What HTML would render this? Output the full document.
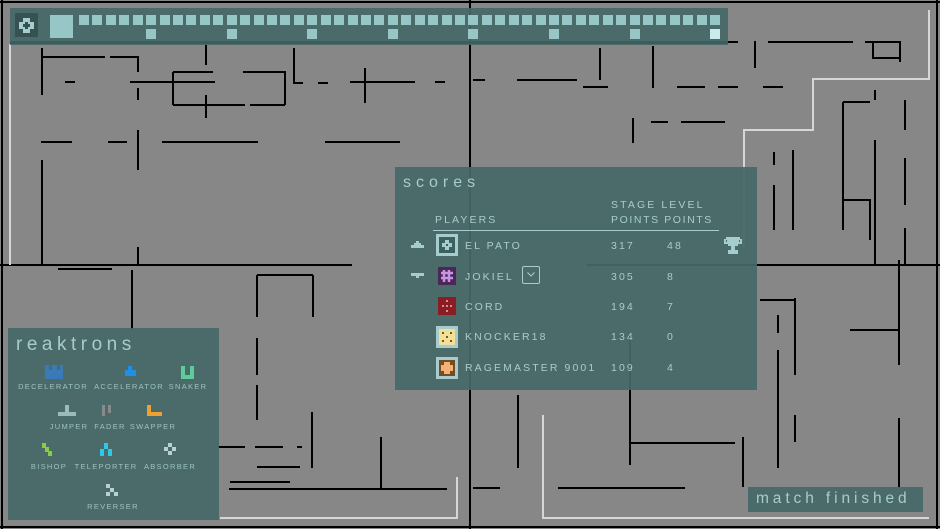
<!DOCTYPE html>
<html><head><meta charset="utf-8"><style>
html,body{margin:0;padding:0;}
body{width:940px;height:529px;background:#878787;position:relative;overflow:hidden;font-family:"Liberation Sans",sans-serif;color:#a6cdcd;}
.p{position:absolute;background:rgba(70,103,103,0.93);}
.t{position:absolute;white-space:nowrap;text-transform:uppercase;font-size:10.5px;letter-spacing:2.1px;line-height:1;}
.sq{position:absolute;background:#97c6c6;width:10px;height:10px;}
.lab{position:absolute;font-size:7.5px;letter-spacing:1.3px;white-space:nowrap;color:#9cc3c3;transform:translateX(-50%);}
</style></head><body>
<svg width="940" height="529" style="position:absolute;left:0;top:0" xmlns="http://www.w3.org/2000/svg">
<g stroke="#000" stroke-width="2" fill="none">
<path d="M0 2H940M2 0V529M937 0V529M0 527H940M470 0V529M0 265H352M587 265H940"/>
<path d="M42 48V95M42 57H105M110 57H138V72M65 82H75M130 82H215M138 88V100M173 72V105M173 72H213M206 45V65M173 105H245M206 95V118M250 105H285M243 72H285V105M294 48V83H303M318 83H328M350 82H415M435 82H445M365 68V103"/>
<path d="M41 142H72M108 142H127M138 130V170M162 142H258M325 142H400M42 160V265M138 247V265M58 269H112M132 270V330M257 275H313M257 275V317M313 275V317"/>
<path d="M728 42H738M755 41V68M768 42H853M865 42H900V62M873 42V58H900M600 48V80M653 46V88M473 80H485M517 80H577M583 87H608M677 87H705M718 87H738M763 87H783M633 118V143M651 122H668M681 122H725M793 150V230M875 90V100M875 140V265M843 102H870M843 102V230M843 200H870V240M905 100V130M905 158V205M905 228V265M774 152V165M774 185V230"/>
<path d="M899 260V365M795 298V375M760 300H795M778 315V333M778 350V468M795 415V442M850 330H900M899 418V487M518 395V468M630 335V465M630 443H735M743 437V487M473 488H500M558 488H685"/>
<path d="M257 338V375M257 385V420M312 412V468M218 447H245M255 447H283M297 447H302M257 467H300M230 482H290M229 489H447M381 437V489"/>
</g>
<g stroke="#d6d6d6" stroke-width="2" fill="none">
<path d="M10 44V265M929 10V79H813V130H744V250M543 415V518H929M457 477V518H220"/>
</g>
</svg>

<!-- top bar -->
<div class="p" style="left:10px;top:8px;width:718px;height:37px;"></div>
<div style="position:absolute;left:10px;top:41px;width:718px;height:3px;background:#3f5c5c"></div>
<div style="position:absolute;left:15px;top:13px;width:23px;height:24px;background:#355151"></div>
<svg style="position:absolute;left:18px;top:17px" width="17" height="17" viewBox="0 0 17 17"><path d="M5 1H12V5H16V12H12V16H5V12H1V5H5Z" fill="#a6cdcd"/><path d="M7 5H10V7H12V10H10V12H7V10H5V7H7Z" fill="#355151"/></svg>
<div style="position:absolute;left:50px;top:15px;width:23px;height:23px;background:#97c6c6"></div>
<div id="sqs"></div>

<!-- scores -->
<div class="p" style="left:395px;top:167px;width:362px;height:223px;"></div>
<div class="t" style="left:403px;top:175px;font-size:16px;letter-spacing:5px;text-transform:lowercase">scores</div>
<div class="t" style="left:611px;top:200px">Stage Level</div>
<div class="t" style="left:611px;top:215px;letter-spacing:1.6px">Points Points</div>
<div class="t" style="left:435px;top:215px">Players</div>
<div style="position:absolute;left:433px;top:230px;width:286px;height:1px;background:#a6cdcd"></div>
<svg style="position:absolute;left:723px;top:236px" width="20" height="20" viewBox="0 0 20 20"><path d="M3 1H17V3H19V8H15V10H12V14H15V18H5V14H8V10H5V8H1V3H3Z M3 4V6H4V4Z M16 4V6H17V4Z" fill="#a6cdcd" fill-rule="evenodd"/></svg>
<svg style="position:absolute;left:411px;top:241px" width="13" height="7"><path d="M5 0H8V2H10V4H13V7H0V4H3V2H5Z" fill="#a6cdcd"/></svg>
<svg style="position:absolute;left:411px;top:273px" width="13" height="7"><path d="M0 0H13V3H8V5H5V3H0Z" fill="#a6cdcd"/></svg>
<div style="position:absolute;left:436px;top:234px;width:22px;height:22px;background:#a6cdcd"></div>
<div style="position:absolute;left:439px;top:237px;width:16px;height:16px;background:#3f6060"></div>
<svg style="position:absolute;left:441px;top:239px" width="12" height="12"><path d="M4 1H8V4H11V8H8V11H4V8H1V4H4Z" fill="#a6cdcd"/><rect x="5" y="5" width="2" height="2" fill="#3f6060"/></svg>
<div style="position:absolute;left:438px;top:267px;width:18px;height:18px;background:#4a2758"></div>
<svg style="position:absolute;left:440px;top:269px" width="14" height="14"><path d="M4 1V13M9 1V13M1 4H13M1 9H13" stroke="#c694e0" stroke-width="2.5"/></svg>
<div style="position:absolute;left:438px;top:297px;width:18px;height:18px;background:#8a1c24"></div>
<svg style="position:absolute;left:438px;top:297px" width="18" height="18" fill="#e08a8a"><rect x="8" y="3" width="2" height="2"/><rect x="4" y="8" width="2" height="2"/><rect x="8" y="8" width="2" height="2"/><rect x="12" y="8" width="2" height="2"/><rect x="8" y="13" width="2" height="2"/></svg>
<div style="position:absolute;left:436px;top:326px;width:22px;height:22px;background:#a6cdcd"></div>
<div style="position:absolute;left:439px;top:329px;width:16px;height:16px;background:#f1df9a"></div>
<svg style="position:absolute;left:439px;top:329px" width="16" height="16" fill="#7a5a10"><rect x="3" y="3" width="2" height="2"/><rect x="11" y="3" width="2" height="2"/><rect x="7" y="7" width="2" height="2"/><rect x="3" y="11" width="2" height="2"/><rect x="11" y="11" width="2" height="2"/></svg>
<div style="position:absolute;left:436px;top:357px;width:22px;height:22px;background:#a6cdcd"></div>
<div style="position:absolute;left:439px;top:360px;width:16px;height:16px;background:#7a4a20"></div>
<svg style="position:absolute;left:440px;top:361px" width="14" height="14"><path d="M4 1H10V4H13V10H10V13H4V10H1V4H4Z" fill="#f0b276"/></svg>
<div class="t" style="left:465px;top:241px">El Pato</div>
<div class="t" style="left:465px;top:272px">Jokiel</div>
<div style="position:absolute;left:522px;top:266px;width:18px;height:18px;border:1.5px solid #a6cdcd;border-radius:2px;box-sizing:border-box"></div>
<svg style="position:absolute;left:527px;top:272px" width="8" height="5"><path d="M0.5 0.5L4 4L7.5 0.5" stroke="#a6cdcd" fill="none"/></svg>
<div class="t" style="left:465px;top:302px">Cord</div>
<div class="t" style="left:465px;top:332px">Knocker18</div>
<div class="t" style="left:465px;top:363px">Ragemaster 9001</div>
<div class="t" style="left:611px;top:241px">317</div><div class="t" style="left:667px;top:241px">48</div>
<div class="t" style="left:611px;top:272px">305</div><div class="t" style="left:667px;top:272px">8</div>
<div class="t" style="left:611px;top:302px">194</div><div class="t" style="left:667px;top:302px">7</div>
<div class="t" style="left:611px;top:332px">134</div><div class="t" style="left:667px;top:332px">0</div>
<div class="t" style="left:611px;top:363px">109</div><div class="t" style="left:667px;top:363px">4</div>

<!-- reaktrons -->
<div class="p" style="left:8px;top:328px;width:211px;height:192px;"></div>
<div class="t" style="left:16px;top:335px;font-size:19px;letter-spacing:4.5px;text-transform:lowercase">reaktrons</div>
<svg style="position:absolute;left:0;top:0" width="230" height="529">
<path d="M45 365H49V370H52V365H57V370H60V365H63V379H45Z" fill="#3a7ab8"/>
<path d="M125 376V370H128V366H132V370H136V376Z" fill="#1e8fe8"/>
<path d="M181 366H185V375H190V366H194V379H181Z" fill="#5ccc98"/>
<path d="M65 405H69V412H76V416H58V412H65Z" fill="#9cbaba"/>
<path d="M102 405H105V416H102Z M108 405H111V413H108Z" fill="#8a8a8a"/>
<path d="M147 405H151V412H162V416H147Z" fill="#f0a030"/>
<path d="M42 443H46V447H49V451H52V456H48V452H45V448H42Z" fill="#88cc44"/>
<path d="M104 443H108V449H104Z M100 449H104V456H100Z M108 449H112V456H108Z" fill="#30c8e8"/>
<path d="M168 443H172V447H168Z M164 447H168V451H164Z M172 447H176V451H172Z M168 451H172V455H168Z" fill="#b8d0d0"/>
<path d="M106 484H110V488H106Z M110 488H114V492H110Z M106 492H110V496H106Z M114 492H118V496H114Z" fill="#b8d0d0"/>
</svg>
<div class="lab" style="left:53px;top:382px">DECELERATOR</div>
<div class="lab" style="left:129px;top:382px">ACCELERATOR</div>
<div class="lab" style="left:188px;top:382px">SNAKER</div>
<div class="lab" style="left:69px;top:422px">JUMPER</div>
<div class="lab" style="left:110px;top:422px">FADER</div>
<div class="lab" style="left:153px;top:422px">SWAPPER</div>
<div class="lab" style="left:49px;top:462px">BISHOP</div>
<div class="lab" style="left:106px;top:462px">TELEPORTER</div>
<div class="lab" style="left:170px;top:462px">ABSORBER</div>
<div class="lab" style="left:113px;top:502px">REVERSER</div>

<!-- match finished -->
<div class="p" style="left:748px;top:487px;width:175px;height:25px;"></div>
<div class="t" style="left:756px;top:491px;font-size:15.5px;letter-spacing:3.9px;text-transform:lowercase">match finished</div>

<script>
var h='';
for(var i=0;i<48;i++){var x=Math.round(79+i*13.43);h+='<div class="sq" style="left:'+x+'px;top:15px"></div>';
if(i%6==5)h+='<div class="sq" style="left:'+x+'px;top:29px;'+(i==47?'background:#c8ecec':'')+'"></div>';}
document.getElementById('sqs').innerHTML=h;
</script>
</body></html>
